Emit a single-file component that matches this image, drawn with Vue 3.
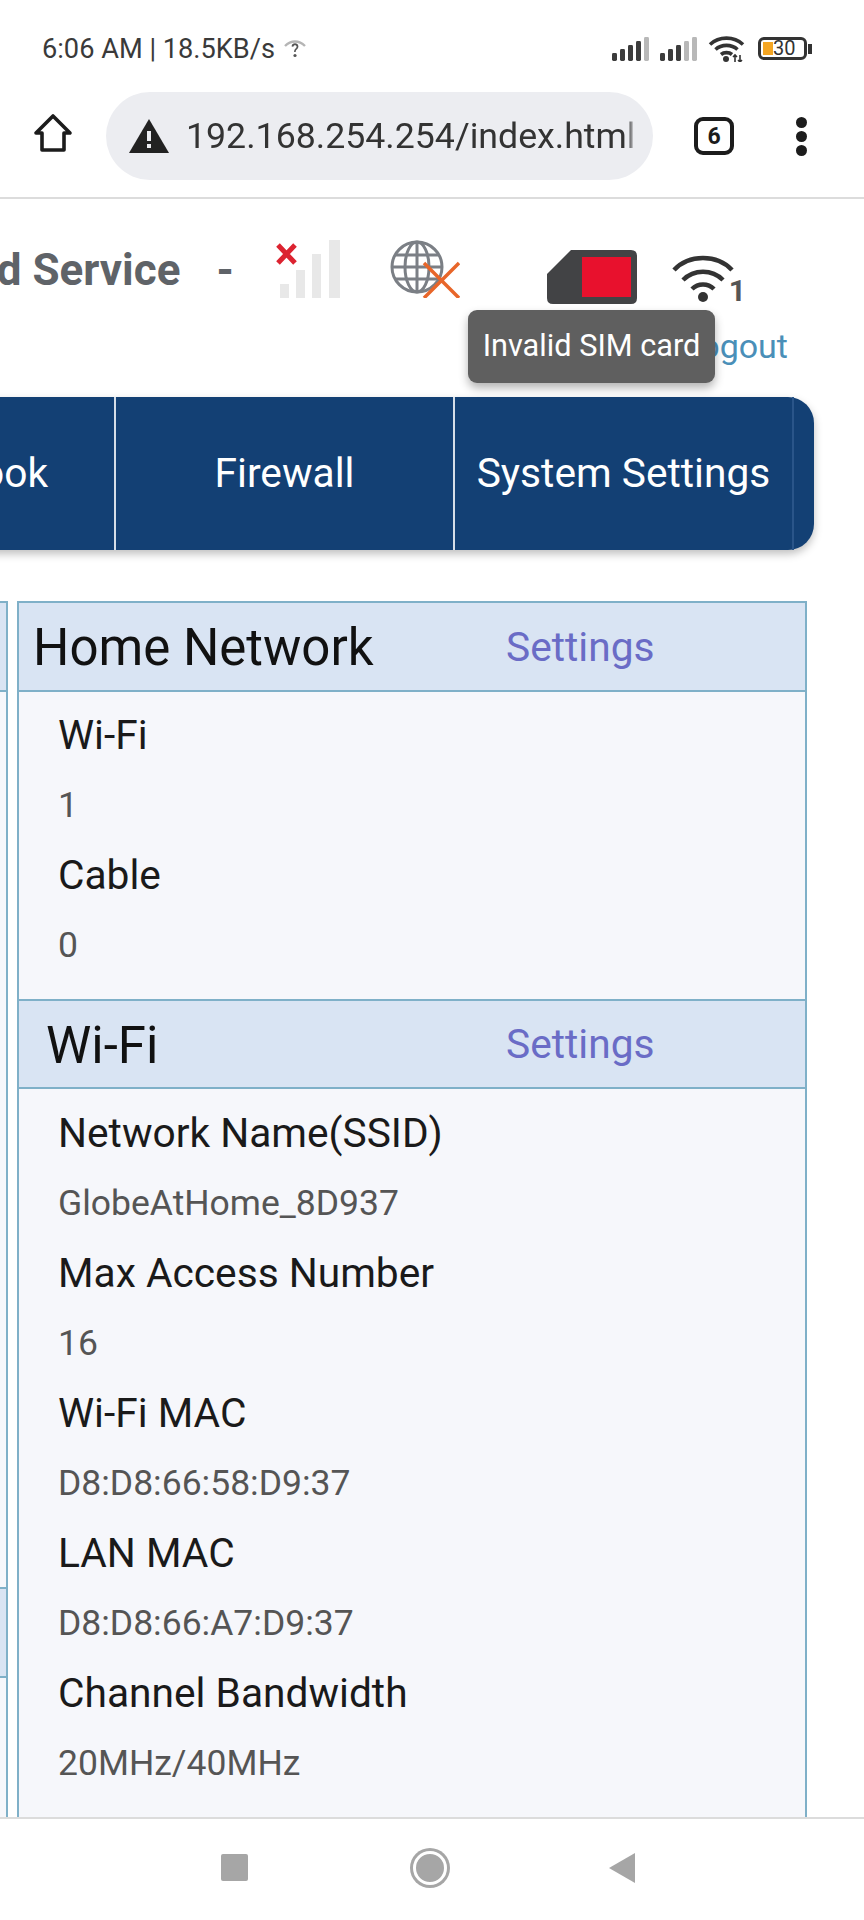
<template>
  <div class="phone">
    <div class="status-bar">
      <div class="status-left">
        <span>6:06 AM | 18.5KB/s</span>
        <svg class="hotspot" width="24" height="20" viewBox="0 0 24 20">
          <path d="M2 7C8 1 16 1 22 7" fill="none" stroke="#b5b5b5" stroke-width="2.4" />
          <path d="M8.6 7.5c0-4.4 6.8-4.4 6.8 0 0 2.6-2.7 2.8-2.7 5.4h-1.6c0-3.2 2.5-3.5 2.5-5.2 0-2-3.2-2-3.2 0z" fill="#555" />
          <circle cx="12" cy="16.5" r="1.6" fill="#555" />
        </svg>
      </div>
      <div class="status-right">
        <svg v-for="(sim, i) in simSignals" :key="i" class="sb-signal" width="37" height="24" viewBox="0 0 37 24">
          <rect
            v-for="(bar, j) in sim"
            :key="j"
            :x="j * 8"
            :y="24 - bar.h"
            width="5"
            :height="bar.h"
            rx="1.4"
            :fill="bar.on ? '#3c3c3c' : '#b8b8b8'"
          />
        </svg>
        <svg class="sb-wifi" width="37" height="27" viewBox="0 0 37 27">
          <path d="M2 9.5C11 1 26 1 35 9.5" fill="none" stroke="#333" stroke-width="3.6" />
          <path d="M7.5 14.5C13.5 9 23.5 9 29.5 14.5" fill="none" stroke="#333" stroke-width="3.6" />
          <path d="M13 19.5C16 17 21 17 24 19.5" fill="none" stroke="#333" stroke-width="3.6" />
          <circle cx="18" cy="24" r="3" fill="#333" />
          <path d="M27 27V20M32 27V20M25 22l2-2 2 2M30 25l2 2 2-2" fill="none" stroke="#333" stroke-width="1.6" />
        </svg>
        <div class="battery">
          <div class="battery-fill"></div>
          <span class="battery-num">30</span>
        </div>
        <div class="battery-nub"></div>
      </div>
    </div>

    <div class="toolbar">
      <svg class="home-icon" width="40" height="40" viewBox="0 0 40 40">
        <path d="M20 3L37 20H31V37H9V20H3Z" fill="none" stroke="#1c1c1c" stroke-width="3.6" stroke-linejoin="round" />
      </svg>
      <div class="url-bar">
        <svg class="warn-icon" width="40" height="34" viewBox="0 0 40 34">
          <path d="M20 0L40 34H0Z" fill="#222" />
          <rect x="18" y="12" width="4" height="10" fill="#ecedf1" />
          <rect x="18" y="25" width="4" height="4" fill="#ecedf1" />
        </svg>
        <span class="url-text">192.168.254.254/index.html#</span>
      </div>
      <div class="tab-count">6</div>
      <div class="menu-dots">
        <span v-for="n in 3" :key="n"></span>
      </div>
    </div>

    <div class="page">
      <div class="head-row">
        <span class="service">Limited Service</span>
        <span class="dash">-</span>
        <svg class="signal-icon" width="66" height="58" viewBox="0 0 66 58">
          <rect x="4" y="44" width="9" height="14" fill="#e8e8e8" />
          <rect x="20" y="30" width="9" height="28" fill="#e8e8e8" />
          <rect x="36" y="14" width="9" height="44" fill="#e8e8e8" />
          <rect x="53" y="0" width="11" height="58" fill="#e8e8e8" />
          <path d="M2 5L19 23M19 5L2 23" stroke="#dc2330" stroke-width="5" />
        </svg>
        <svg class="globe-icon" width="70" height="58" viewBox="0 0 70 58">
          <g fill="none" stroke="#7b7f85" stroke-width="3">
            <circle cx="27" cy="27" r="25" />
            <ellipse cx="27" cy="27" rx="12" ry="25" />
            <path d="M27 2V52M5 15H49M2 27H52M5 39H49" />
          </g>
          <path d="M34 23L69 58M69 23L34 58" stroke="#e8662a" stroke-width="3.5" />
        </svg>
        <svg class="sim-icon" width="90" height="54" viewBox="0 0 90 54">
          <path d="M24 0H84Q90 0 90 6V48Q90 54 84 54H6Q0 54 0 48V24Z" fill="#424345" />
          <rect x="35" y="7" width="49" height="40" fill="#e8112d" />
        </svg>
        <div class="wifi-wrap">
          <svg width="62" height="48" viewBox="0 0 62 48">
            <g fill="none" stroke="#333" stroke-width="4.5">
              <path d="M2 15C17 -1 45 -1 60 15" />
              <path d="M11 25C22 14 40 14 51 25" />
              <path d="M20 34C26 28 36 28 42 34" />
            </g>
            <circle cx="31" cy="42" r="5" fill="#333" />
          </svg>
          <span class="wifi-num">1</span>
        </div>
      </div>

      <div class="logout-row">
        <a class="logout">Logout</a>
        <div class="tooltip">Invalid SIM card</div>
      </div>

      <div class="nav-wrap">
        <div class="nav">
          <div v-for="item in navItems" :key="item" class="nav-item">{{ item }}</div>
          <div class="nav-end"></div>
        </div>
      </div>

      <div class="columns">
        <div class="side-card">
          <div class="side-head"></div>
          <div class="side-body"></div>
          <div class="side-head"></div>
          <div class="side-body"></div>
        </div>
        <div class="card">
          <template v-for="sec in sections" :key="sec.title">
            <div class="card-head" :class="sec.cls">
              <span class="card-title">{{ sec.title }}</span>
              <a class="card-link">Settings</a>
            </div>
            <div class="card-body" :class="sec.cls">
              <template v-for="row in sec.rows" :key="row[0]">
                <div class="label">{{ row[0] }}</div>
                <div class="value">{{ row[1] }}</div>
              </template>
            </div>
          </template>
        </div>
      </div>
    </div>

    <div class="nav-bar">
      <div class="nav-square"></div>
      <div class="nav-circle"></div>
      <svg width="26" height="30" viewBox="0 0 26 30">
        <path d="M26 0V30L0 15Z" fill="#a6a6a6" />
      </svg>
    </div>
  </div>
</template>

<script setup>
const makeBars = (on) => [8, 12, 16, 20, 24].map((h, i) => ({ h, on: i < on }))
const simSignals = [makeBars(4), makeBars(3)]

const navItems = ['Phonebook', 'Firewall', 'System Settings']

const sections = [
  {
    title: 'Home Network',
    cls: 'home',
    rows: [
      ['Wi-Fi', '1'],
      ['Cable', '0']
    ]
  },
  {
    title: 'Wi-Fi',
    cls: 'wifi',
    rows: [
      ['Network Name(SSID)', 'GlobeAtHome_8D937'],
      ['Max Access Number', '16'],
      ['Wi-Fi MAC', 'D8:D8:66:58:D9:37'],
      ['LAN MAC', 'D8:D8:66:A7:D9:37'],
      ['Channel Bandwidth', '20MHz/40MHz']
    ]
  }
]
</script>

<style>
html,
body {
  margin: 0;
  background: #fff;
}
</style>

<style scoped>
.phone {
  width: 864px;
  height: 1920px;
  display: flex;
  flex-direction: column;
  overflow: hidden;
  background: #fff;
  font-family: Roboto, "Liberation Sans", sans-serif;
}

/* status bar */
.status-bar {
  height: 92px;
  flex: none;
  display: flex;
  justify-content: space-between;
  align-items: center;
  padding: 5px 52px 0 42px;
  box-sizing: border-box;
}

.status-left {
  display: flex;
  align-items: center;
  gap: 8px;
  font-size: 27.2px;
  color: #3a3a3a;
}

.status-right {
  display: flex;
  align-items: center;
}

.sb-signal {
  margin-right: 11px;
}

.sb-wifi {
  margin-right: 13px;
}

.battery {
  width: 49px;
  height: 23px;
  box-sizing: border-box;
  border: 3px solid #333;
  border-radius: 6px;
  display: flex;
  align-items: center;
  padding-left: 2px;
}

.battery-fill {
  width: 10px;
  height: 13px;
  background: #f5a623;
}

.battery-num {
  font-size: 20px;
  line-height: 17px;
  color: #333;
}

.battery-nub {
  width: 4px;
  height: 10px;
  background: #333;
  margin-left: 1px;
}

/* browser toolbar */
.toolbar {
  height: 107px;
  flex: none;
  display: flex;
  align-items: flex-start;
  border-bottom: 2px solid #dcdcdc;
  box-sizing: border-box;
}

.home-icon {
  margin: 21px 0 0 33px;
}

.url-bar {
  width: 547px;
  height: 88px;
  margin-left: 33px;
  border-radius: 44px;
  background: #ecedf1;
  display: flex;
  align-items: center;
  padding-left: 23px;
  box-sizing: border-box;
  overflow: hidden;
}

.url-text {
  margin-left: 17px;
  width: 450px;
  overflow: hidden;
  white-space: nowrap;
  font-size: 35.7px;
  line-height: 46px;
  color: #333;
  -webkit-mask-image: linear-gradient(to right, #000 98%, transparent 100%);
  mask-image: linear-gradient(to right, #000 98%, transparent 100%);
}

.tab-count {
  width: 40px;
  height: 38px;
  margin: 25px 0 0 41px;
  box-sizing: border-box;
  border: 4px solid #1c1c1c;
  border-radius: 9px;
  display: flex;
  align-items: center;
  justify-content: center;
  font-size: 23px;
  font-weight: 700;
  color: #1c1c1c;
}

.menu-dots {
  margin: 25px 0 0 62px;
  display: flex;
  flex-direction: column;
  gap: 3px;
}

.menu-dots span {
  width: 11px;
  height: 11px;
  border-radius: 50%;
  background: #1c1c1c;
}

/* router page */
.page {
  flex: 1;
  min-height: 0;
  overflow: hidden;
  display: flex;
  flex-direction: column;
}

.head-row {
  height: 108px;
  flex: none;
  display: flex;
  align-items: flex-start;
  justify-content: flex-end;
  padding-right: 118px;
  white-space: nowrap;
}

.head-row > * {
  flex: none;
}

.service {
  font-size: 44px;
  font-weight: 700;
  color: #5f6368;
  margin-top: 45px;
}

.dash {
  font-size: 44px;
  font-weight: 700;
  color: #5f6368;
  margin: 45px 0 0 36px;
}

.signal-icon {
  margin: 41px 0 0 42px;
}

.globe-icon {
  margin: 41px 0 0 48px;
}

.sim-icon {
  margin: 51px 0 0 87px;
}

.wifi-wrap {
  margin: 56px 0 0 35px;
  display: flex;
  align-items: flex-end;
  height: 48px;
}

.wifi-num {
  font-size: 30px;
  line-height: 24px;
  font-weight: 700;
  color: #555;
  margin-left: -5px;
}

.logout-row {
  height: 90px;
  flex: none;
  position: relative;
  display: flex;
  justify-content: flex-end;
  padding-right: 76px;
}

.logout {
  font-size: 34px;
  line-height: 78px;
  color: #4a8fb8;
}

.tooltip {
  position: absolute;
  left: 468px;
  top: 3px;
  width: 247px;
  height: 73px;
  border-radius: 9px;
  background: #5f5f5f;
  color: #fff;
  font-size: 30.7px;
  line-height: 71px;
  text-align: center;
  box-shadow: 0 5px 10px rgba(0, 0, 0, 0.3);
  white-space: nowrap;
}

.nav-wrap {
  flex: none;
  display: flex;
  justify-content: flex-end;
  padding-right: 50px;
}

.nav {
  flex: none;
  height: 153px;
  display: flex;
  background: #134074;
  border-radius: 0 26px 26px 0;
  box-shadow: 0 4px 9px rgba(0, 0, 0, 0.25);
}

.nav-item {
  width: 339px;
  flex: none;
  display: flex;
  align-items: center;
  justify-content: center;
  color: #fff;
  font-size: 40.7px;
  padding-bottom: 2px;
  border-right: 2px solid #d5dee8;
  box-sizing: border-box;
  white-space: nowrap;
}

.nav-item:nth-child(3) {
  border-right-color: #2a5589;
}

.nav-end {
  width: 20px;
  flex: none;
}

.columns {
  flex: 1;
  min-height: 0;
  display: flex;
  gap: 9px;
  margin: 51px 57px 0 0;
}

.side-card {
  width: 8px;
  flex: none;
  background: #f6f7fb;
  border-right: 2px solid #7fb0c8;
  box-sizing: border-box;
  display: flex;
  flex-direction: column;
}

.side-head {
  height: 91px;
  flex: none;
  background: #d9e4f3;
  border-top: 2px solid #7fb0c8;
  border-bottom: 2px solid #7fb0c8;
  box-sizing: border-box;
}

.side-body {
  height: 895px;
  flex: none;
}

.card {
  flex: 1;
  min-width: 0;
  background: #f6f7fb;
  border-left: 2px solid #7fb0c8;
  border-right: 2px solid #7fb0c8;
  box-sizing: border-box;
}

.card-head {
  height: 91px;
  box-sizing: border-box;
  display: flex;
  align-items: center;
  background: #d9e4f3;
  border-top: 2px solid #7fb0c8;
  border-bottom: 2px solid #7fb0c8;
  position: relative;
}

.card-head.wifi {
  height: 90px;
}

.card-title {
  font-size: 51px;
  color: #111;
  padding: 2px 0 0 14px;
}

.card-head.wifi .card-title {
  padding-left: 27px;
}

.card-link {
  position: absolute;
  left: 487px;
  font-size: 40.7px;
  color: #6a6cc6;
}

.card-body {
  padding: 7px 0 20px 39px;
}

.card-body.wifi {
  padding-top: 8px;
}

.label,
.value {
  height: 70px;
  white-space: nowrap;
}

.label {
  font-size: 40.7px;
  line-height: 72px;
  color: #1a1a1a;
}

.value {
  font-size: 35.5px;
  line-height: 72px;
  color: #555;
}

/* android nav bar */
.nav-bar {
  height: 103px;
  flex: none;
  border-top: 2px solid #dcdcdc;
  box-sizing: border-box;
  background: #fff;
  display: flex;
  align-items: center;
  padding: 0 0 4px 221px;
}

.nav-square {
  width: 27px;
  height: 27px;
  border-radius: 2px;
  background: #a6a6a6;
}

.nav-circle {
  width: 28px;
  height: 28px;
  margin-left: 165px;
  border-radius: 50%;
  background: #a6a6a6;
  border: 3px solid #fff;
  box-shadow: 0 0 0 3px #a6a6a6;
}

.nav-bar svg {
  margin-left: 162px;
}
</style>
